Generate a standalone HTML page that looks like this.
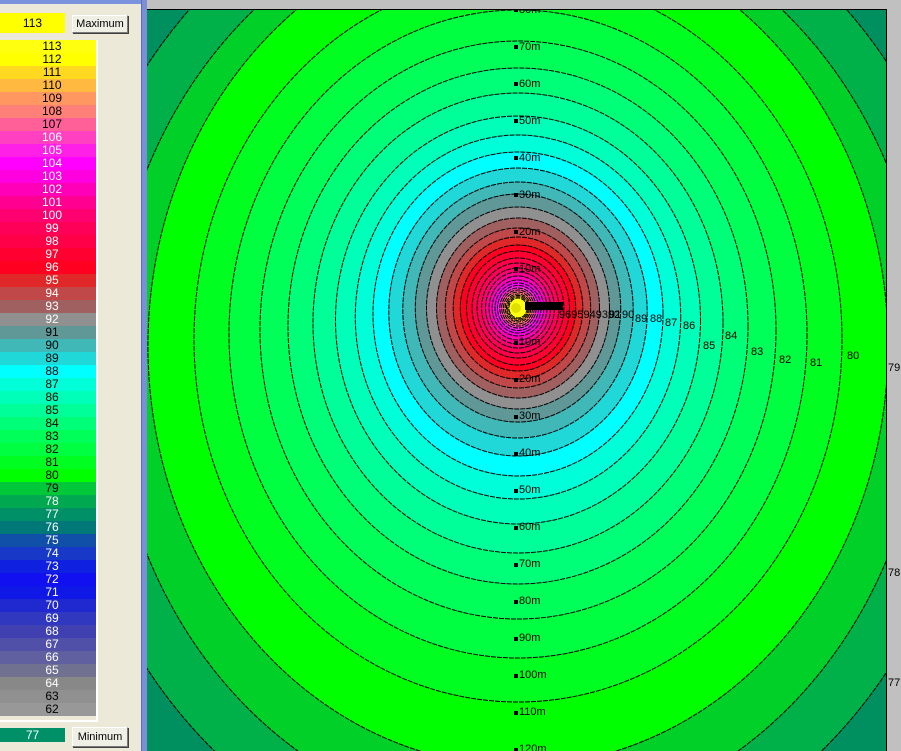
<!DOCTYPE html>
<html><head><meta charset="utf-8"><style>
html,body{margin:0;padding:0;width:901px;height:751px;overflow:hidden;background:#c0c0c0;font-family:Tahoma,"Liberation Sans",sans-serif;}
#panel{position:absolute;left:0;top:0;width:141px;height:751px;background:#ece9d8;overflow:hidden;}
#topbar{position:absolute;left:0;top:0;width:141px;height:4px;background:#7b93de;}
#frame{position:absolute;left:141px;top:0;width:6px;height:751px;background:#7c8fd6;border-left:1px solid #5d6fc0;box-sizing:border-box;}
.box{position:absolute;font-size:12px;text-align:center;}
.btn{position:absolute;background:#f0efe6;border:1px solid #7a7a7a;border-top-color:#fff;border-left-color:#fff;box-shadow:1px 1px 0 #404040;font-size:11px;text-align:center;box-sizing:border-box;}
#legend{position:absolute;left:0;top:40px;width:96px;height:680px;border-right:2px solid #fff;border-bottom:2px solid #fff;}
#legend div{height:13px;line-height:13px;font-size:12px;text-align:center;padding-left:8px;box-sizing:border-box;}
#plot{position:absolute;left:147px;top:9px;width:740px;height:742px;overflow:hidden;border-top:1px solid #000;border-right:1px solid #000;box-sizing:border-box;}
</style></head><body>
<div id="panel">
<div id="topbar"></div>
<div class="box" style="left:0;top:13px;width:65px;height:20px;line-height:20px;background:#ffff00;color:#000;">113</div>
<div class="btn" style="left:72px;top:15px;width:56px;height:18px;line-height:16px;">Maximum</div>
<div id="legend">
<div style="background:#ffff10;color:#000">113</div>
<div style="background:#ffff00;color:#000">112</div>
<div style="background:#ffd820;color:#000">111</div>
<div style="background:#ffb840;color:#000">110</div>
<div style="background:#ff9860;color:#000">109</div>
<div style="background:#ff8078;color:#000">108</div>
<div style="background:#ff6098;color:#000">107</div>
<div style="background:#ff40c0;color:#fff">106</div>
<div style="background:#ff20e8;color:#fff">105</div>
<div style="background:#ff00ff;color:#fff">104</div>
<div style="background:#ff00e0;color:#fff">103</div>
<div style="background:#ff00b8;color:#fff">102</div>
<div style="background:#ff0090;color:#fff">101</div>
<div style="background:#ff0070;color:#fff">100</div>
<div style="background:#ff0058;color:#fff">99</div>
<div style="background:#ff0048;color:#fff">98</div>
<div style="background:#ff0030;color:#fff">97</div>
<div style="background:#ff0020;color:#fff">96</div>
<div style="background:#e02828;color:#fff">95</div>
<div style="background:#c04848;color:#fff">94</div>
<div style="background:#a06060;color:#fff">93</div>
<div style="background:#909090;color:#fff">92</div>
<div style="background:#609898;color:#000">91</div>
<div style="background:#40b8b8;color:#000">90</div>
<div style="background:#20d8d8;color:#000">89</div>
<div style="background:#00ffff;color:#000">88</div>
<div style="background:#00ffd8;color:#000">87</div>
<div style="background:#00ffb8;color:#000">86</div>
<div style="background:#00ff98;color:#000">85</div>
<div style="background:#00ff78;color:#000">84</div>
<div style="background:#00ff58;color:#000">83</div>
<div style="background:#00ff40;color:#000">82</div>
<div style="background:#00ff20;color:#000">81</div>
<div style="background:#00ff00;color:#000">80</div>
<div style="background:#00c838;color:#000">79</div>
<div style="background:#00a850;color:#fff">78</div>
<div style="background:#009068;color:#fff">77</div>
<div style="background:#007878;color:#fff">76</div>
<div style="background:#1050a8;color:#fff">75</div>
<div style="background:#1838c8;color:#fff">74</div>
<div style="background:#1020e0;color:#fff">73</div>
<div style="background:#1010f0;color:#fff">72</div>
<div style="background:#1018e8;color:#fff">71</div>
<div style="background:#2028d0;color:#fff">70</div>
<div style="background:#3038c0;color:#fff">69</div>
<div style="background:#4040b0;color:#fff">68</div>
<div style="background:#5050a8;color:#fff">67</div>
<div style="background:#6060a0;color:#fff">66</div>
<div style="background:#707090;color:#fff">65</div>
<div style="background:#888888;color:#fff">64</div>
<div style="background:#909090;color:#000">63</div>
<div style="background:#989898;color:#000">62</div>
</div>
<div class="box" style="left:0;top:728px;width:65px;height:14px;line-height:14px;background:#009068;color:#fff;">77</div>
<div class="btn" style="left:72px;top:727px;width:56px;height:20px;line-height:18px;">Minimum</div>
</div>
<div id="frame"></div>
<div id="plot">
<svg width="740" height="742" xmlns="http://www.w3.org/2000/svg" style="display:block">
<rect width="740" height="742" fill="#008868"/>
<g transform="translate(371,0)" stroke="#000" stroke-width="1" stroke-dasharray="5 1">
<ellipse cy="356" rx="514" ry="575" fill="#009060"/>
<ellipse cy="357" rx="459" ry="512" fill="#00b048"/>
<ellipse cy="352" rx="408" ry="462" fill="#00d028"/>
<ellipse cy="336" rx="370" ry="420" fill="#00ff00"/>
<ellipse cy="329" rx="324" ry="363" fill="#00ff20"/>
<ellipse cy="324" rx="289" ry="324" fill="#00ff40"/>
<ellipse cy="320" rx="258" ry="289" fill="#00ff58"/>
<ellipse cy="316" rx="230" ry="258" fill="#00ff78"/>
<ellipse cy="313" rx="205" ry="230" fill="#00ff98"/>
<ellipse cy="310" rx="182.5" ry="204" fill="#00ffb8"/>
<ellipse cy="307" rx="162.7" ry="182" fill="#00ffd8"/>
<ellipse cy="304" rx="145" ry="162" fill="#00ffff"/>
<ellipse cy="302" rx="129.2" ry="144" fill="#20d8d8"/>
<ellipse cy="300" rx="115.2" ry="128" fill="#40b8b8"/>
<ellipse cy="298" rx="102.7" ry="114" fill="#609898"/>
<ellipse cy="298" rx="91.5" ry="101" fill="#909090"/>
<ellipse cy="298" rx="81.5" ry="90" fill="#a06060"/>
<ellipse cy="298" rx="72.7" ry="80" fill="#c04848"/>
<ellipse cy="298" rx="64.8" ry="71" fill="#e02828"/>
<ellipse cy="298" rx="57.7" ry="63" fill="#ff0020"/>
<ellipse cy="298" rx="51.5" ry="57" fill="#ff0030"/>
<ellipse cy="298" rx="45.9" ry="50" fill="#ff0048"/>
<ellipse cy="298" rx="40.9" ry="45" fill="#ff0058"/>
<ellipse cy="298" rx="36.4" ry="40" fill="#ff0070"/>
<ellipse cy="298" rx="32.5" ry="36" fill="#ff0090"/>
<ellipse cy="298" rx="28.9" ry="32" fill="#ff00b8"/>
<ellipse cy="298" rx="25.8" ry="28" fill="#ff00e0"/>
<ellipse cy="298" rx="23" ry="25" fill="#ff00ff"/>
<ellipse cy="298" rx="20.5" ry="22.5" fill="#ff20e8"/>
<ellipse cy="298" rx="18.2" ry="20" fill="#ff40c0"/>
<ellipse cy="298" rx="16.3" ry="18" fill="#ff6098"/>
<ellipse cy="298" rx="14.5" ry="16" fill="#ff8078"/>
<ellipse cy="298" rx="12.9" ry="14" fill="#ff9860"/>
<ellipse cy="298" rx="11.5" ry="12.6" fill="#ffb840"/>
<ellipse cy="298" rx="10.3" ry="11.3" fill="#ffd820"/>
<ellipse cy="298" rx="9.1" ry="10" fill="#ffff00"/>
<ellipse cy="298" rx="8.1" ry="9" fill="#ffff10" stroke="none"/>
<circle cx="-2" cy="298" r="5" fill="#e0e000" stroke="none"/>
</g>
<g font-family="Tahoma,'Liberation Sans',sans-serif" font-size="11" fill="#000">
<g>
<rect x="367" y="-2" width="4" height="4"/><text x="372" y="3">80m</text>
<rect x="367" y="35" width="4" height="4"/><text x="372" y="40">70m</text>
<rect x="367" y="72" width="4" height="4"/><text x="372" y="77">60m</text>
<rect x="367" y="109" width="4" height="4"/><text x="372" y="114">50m</text>
<rect x="367" y="146" width="4" height="4"/><text x="372" y="151">40m</text>
<rect x="367" y="183" width="4" height="4"/><text x="372" y="188">30m</text>
<rect x="367" y="220" width="4" height="4"/><text x="372" y="225">20m</text>
<rect x="367" y="257" width="4" height="4"/><text x="372" y="262">10m</text>
<rect x="367" y="331" width="4" height="4"/><text x="372" y="335">10m</text>
<rect x="367" y="368" width="4" height="4"/><text x="372" y="372">20m</text>
<rect x="367" y="405" width="4" height="4"/><text x="372" y="409">30m</text>
<rect x="367" y="442" width="4" height="4"/><text x="372" y="446">40m</text>
<rect x="367" y="479" width="4" height="4"/><text x="372" y="483">50m</text>
<rect x="367" y="516" width="4" height="4"/><text x="372" y="520">60m</text>
<rect x="367" y="553" width="4" height="4"/><text x="372" y="557">70m</text>
<rect x="367" y="590" width="4" height="4"/><text x="372" y="594">80m</text>
<rect x="367" y="627" width="4" height="4"/><text x="372" y="631">90m</text>
<rect x="367" y="664" width="4" height="4"/><text x="372" y="668">100m</text>
<rect x="367" y="701" width="4" height="4"/><text x="372" y="705">110m</text>
<rect x="367" y="738" width="4" height="4"/><text x="372" y="742">120m</text>
</g>
<rect x="378" y="292" width="38" height="8"/>
<text x="412" y="308">9695949392</text>
<text x="462" y="308">91</text><text x="475" y="308">90</text>
<text x="488" y="312">89</text><text x="503" y="312">88</text>
<text x="518" y="316">87</text><text x="536" y="319">86</text>
<text x="556" y="339">85</text><text x="578" y="329">84</text>
<text x="604" y="345">83</text><text x="632" y="353">82</text>
<text x="663" y="356">81</text><text x="700" y="349">80</text>
</g>
</svg>
</div>
<div style="position:absolute;left:888px;top:362px;font:11px Tahoma,'Liberation Sans',sans-serif;">79</div>
<div style="position:absolute;left:888px;top:567px;font:11px Tahoma,'Liberation Sans',sans-serif;">78</div>
<div style="position:absolute;left:888px;top:677px;font:11px Tahoma,'Liberation Sans',sans-serif;">77</div>
</body></html>
